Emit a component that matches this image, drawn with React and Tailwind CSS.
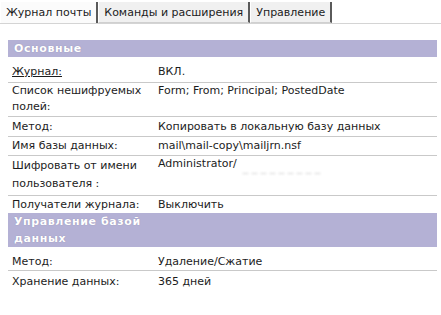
import React from "react"

const font = { fontFamily: '"DejaVu Sans", Tahoma, sans-serif' }

function Tab({ label, active }) {
  return (
    <div
      className={`h-[21px] mt-[3px] px-[5px] pt-[2px] flex items-center border-r-2 border-r-[#5a5a5a] border-l border-l-white ${
        active ? "bg-[#fbfbfb]" : "bg-[#f0f0f0] border-b border-b-[#d0d0d0]"
      }`}
    >
      {label}
    </div>
  )
}

function Header({ children }) {
  return (
    <div className="bg-[#b4b1d5] px-[6px]">
      <div className="w-[150px] font-bold text-white tracking-[0.6px] leading-[17px] [text-shadow:0_0_1px_#8884a8]">
        {children}
      </div>
    </div>
  )
}

function Row({ label, value, underline, className = "", border = true }) {
  return (
    <div className={`flex ${border ? "border-b border-[#c9c9c9]" : ""} ${className}`}>
      <div className="w-[150px] pl-[4px] leading-[16px]">
        <span className={underline ? "underline" : ""}>{label}</span>
      </div>
      <div className="flex-1 leading-[16px]">{value}</div>
    </div>
  )
}

export default function App() {
  return (
    <div className="w-[441px] h-[315px] bg-white overflow-hidden text-[11px] text-[#1c1c1c]" style={font}>
      {/* tabs */}
      <div className="flex items-end border-b border-[#d4d4d4] h-[24px]">
        <Tab label="Журнал почты" active />
        <Tab label="Команды и расширения" />
        <Tab label="Управление" />
      </div>

      <div className="pl-[8px] pr-[4px] pt-[16px]">
        <Header>Основные</Header>
        <Row label="Журнал:" value="ВКЛ." underline className="pt-[7px] pb-[2px]" />
        <Row
          label={<>Список нешифруемых<br />полей:</>}
          value="Form; From; Principal; PostedDate"
          className="pt-[0px] pb-[1px]"
        />
        <Row label="Метод:" value="Копировать в локальную базу данных" className="pt-[2px] pb-[1px]" />
        <Row label="Имя базы данных:" value="mail\mail-copy\mailjrn.nsf" className="pt-[1px] pb-[1px]" />
        <div className="flex border-b border-[#c9c9c9]">
          <div className="w-[150px] pl-[4px] leading-[18px] pt-[1px] pb-[2px]">
            Шифровать от имени
            <br />
            пользователя :
          </div>
          <div className="flex-1 leading-[16px] flex items-start">
            <span>Administrator/</span>
            <span className="ml-[6px] mt-[4px] text-[#c8c8c8] blur-[1px]">_ _ _ _ _ _ _ _ _</span>
          </div>
        </div>
        <Row label="Получатели журнала:" value="Выключить" border={false} className="pt-[1px]" />
        <Header>
          Управление базой
          <br />
          данных
        </Header>
        <Row label="Метод:" value="Удаление/Сжатие" className="pt-[7px]" />
        <Row label="Хранение данных:" value="365 дней" border={false} className="pt-[3px]" />
      </div>
    </div>
  )
}
